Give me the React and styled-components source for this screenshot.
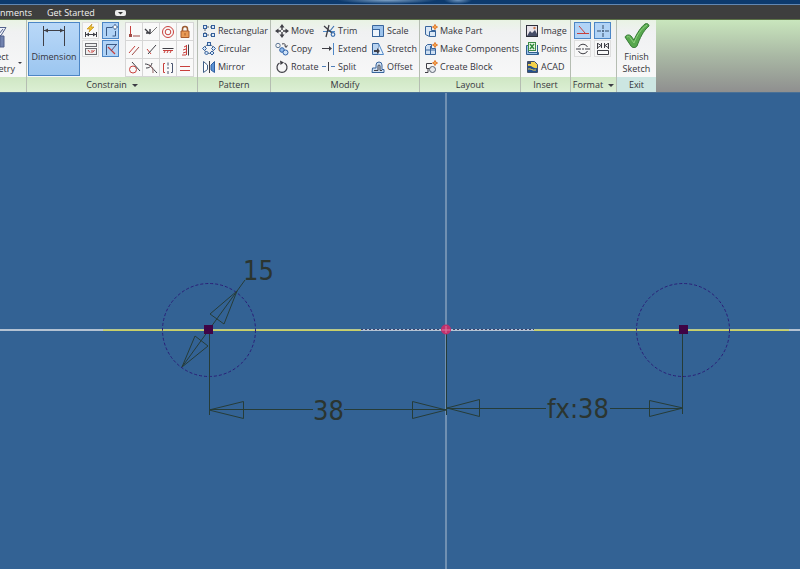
import React, { useState } from 'react';
import styled, { createGlobalStyle } from 'styled-components';

const RED = '#c8403c';
const DARK = '#3f3f46';
const BLUE = '#3a6fb0';
const INK = '#263c38';

const PATTERN = [
  {
    name: 'Rectangular',
    icon: (
      <g fill='#dcebfa' stroke='#345f9a'>
        <path d='M3 5v5M5 3h5M5 11h5' stroke='#5a6370' strokeDasharray='2 1' />
        <rect x='1.5' y='1.5' width='3' height='3' />
        <rect x='9.5' y='1.5' width='3' height='3' />
        <rect x='1.5' y='9.5' width='3' height='3' />
        <rect x='9.5' y='9.5' width='3' height='3' />
      </g>
    ),
  },
  {
    name: 'Circular',
    icon: (
      <g fill='#cfe2f7' stroke='#345f9a'>
        <circle cx='7' cy='7' r='4.5' fill='none' stroke='#6b7c90' />
        <rect x='5.5' y='.5' width='3' height='3' />
        <path d='M.5 6.500l2-2 2 2-2 2zM9.500 6.500l2-2 2 2-2 2zM2.500 11l2-2 2 2-2 2zM8 11l2-2 2 2-2 2z' />
      </g>
    ),
  },
  {
    name: 'Mirror',
    icon: (
      <g>
        <path d='M1.500 1.500L5.500 5v4.500L1.500 12.500z' fill='#fff' stroke='#3f5f88' />
        <path d='M12.500 1.500L9 5v5l3.500 2.500z' fill='#5b93d6' stroke='#2f5f9f' />
        <path d='M7.500 1v12' stroke={DARK} />
      </g>
    ),
  },
];

const MODIFY = [
  {
    name: 'Move',
    icon: (
      <g stroke={DARK} fill={DARK}>
        <path d='M7 3v3M7 8v3M3 7h3M8 7h3' strokeWidth='1.400' />
        <path d='M4.500 3.500L7 0l2.500 3.500zM4.500 10.500L7 14l2.500-3.500zM3.500 4.500L0 7l3.500 2.500zM10.500 4.500L14 7l-3.500 2.500z' stroke='none' />
      </g>
    ),
  },
  {
    name: 'Trim',
    icon: (
      <g fill='none'>
        <path d='M1 7.500h12' stroke='#4f88c8' />
        <path d='M2 2l8 7M4 13L7 1' stroke={DARK} strokeWidth='1.300' />
        <circle cx='11' cy='10.500' r='1.800' stroke={BLUE} strokeWidth='1.200' />
        <path d='M12 2L8 7' stroke={BLUE} strokeWidth='1.200' />
      </g>
    ),
  },
  {
    name: 'Scale',
    icon: (
      <g stroke='#38659c'>
        <path d='M1.500 1.500h11v11h-4v-7h-7z' fill='#9cc3ec' />
        <rect x='1.500' y='5.500' width='7' height='7' fill='#eef5fc' />
      </g>
    ),
  },
  {
    name: 'Copy',
    icon: (
      <g fill='none' stroke='#2f62a8'>
        <circle cx='3' cy='3.500' r='2.200' stroke='#5f7896' />
        <path d='M7 2c3-1 4 1 4 3M9.500 3.500L11 5.500l1.500-2' stroke={DARK} />
        <circle cx='7' cy='8' r='2.300' fill='#8db8ea' />
        <circle cx='10.500' cy='10.500' r='2.500' fill='#cfe2f7' />
      </g>
    ),
  },
  {
    name: 'Extend',
    icon: (
      <g>
        <path d='M0 6.500h8' stroke={DARK} />
        <path d='M7 4l3 2.500L7 9z' fill={DARK} />
        <path d='M11.500 1v12' stroke='#4f88c8' />
      </g>
    ),
  },
  {
    name: 'Stretch',
    icon: (
      <g>
        <path d='M1.500 1.500h6v11h-6z' fill='#b9d4f1' stroke='#38659c' />
        <path d='M7.500 1.500l5 11h-5' fill='#e9f2fb' stroke='#4f88c8' />
        <path d='M3 8h3V6l3 3-3 3v-2H3z' fill={DARK} />
      </g>
    ),
  },
  {
    name: 'Rotate',
    icon: (
      <g>
        <path d='M4.500 3a5 5 0 1 0 5 0' fill='none' stroke={DARK} strokeWidth='1.200' />
        <path d='M5 .5L9 2.500 5.500 5z' fill={DARK} />
      </g>
    ),
  },
  {
    name: 'Split',
    icon: (
      <g>
        <path d='M0 6.500h4M9 6.500h4' stroke='#4f7fb8' />
        <path d='M6.500 2v9' stroke={DARK} />
      </g>
    ),
  },
  {
    name: 'Offset',
    icon: (
      <g fill='none' stroke='#38659c'>
        <path d='M1 12.500h12v-3h-2V5a3 3 0 0 0-6 0v3H1.500z' fill='#cfe0f3' />
        <path d='M3 10.500h4V6a1 1 0 0 1 2 0v4.500h2' stroke={DARK} />
      </g>
    ),
  },
];

const spark = (
  <g stroke='#e2782c' fill='#f7b45a'>
    <path d='M11 0v6M8 3h6' />
    <circle cx='11' cy='3' r='1.500' />
  </g>
);

const LAYOUT = [
  {
    name: 'Make Part',
    icon: (
      <g>
        <path d='M1.500 2.500h6v4h4v6h-6l-4-2z' fill='#dbe8f6' stroke='#38659c' />
        <path d='M5.500 12.500v-5h6' fill='none' stroke='#38659c' />
        {spark}
      </g>
    ),
  },
  {
    name: 'Make Components',
    icon: (
      <g>
        <path d='M1.500 4.500l2-2h4v4h4v6h-10z' fill='#cfe0f3' stroke='#38659c' />
        <path d='M1.500 8h10M6.500 4v8.500' stroke='#38659c' />
        {spark}
      </g>
    ),
  },
  {
    name: 'Create Block',
    icon: (
      <g>
        <path d='M8 3.500H2.500v5h4M1 12.500h3v-4' fill='none' stroke={DARK} />
        <circle cx='8.500' cy='9.500' r='3' fill='#e6e9ee' stroke='#5a6370' />
        {spark}
      </g>
    ),
  },
];

const INSERT = [
  {
    name: 'Image',
    icon: (
      <g>
        <rect x='1.500' y='1.500' width='11' height='11' fill='#e9e4ea' stroke='#2d2f3a' />
        <path d='M2 12l3-5 2 2 3-3 2 4v2z' fill='#454c66' />
        <circle cx='9.500' cy='4' r='1.200' fill='#c9794c' />
      </g>
    ),
  },
  {
    name: 'Points',
    icon: (
      <g>
        <path d='M1.500 3.500h2v7h10v2h-12z' fill='#9fc3e8' stroke='#2f5f8f' />
        <rect x='3.500' y='.5' width='7' height='8' fill='#e8f5e5' stroke='#3d8d48' />
        <path d='M5 2l4 5M9 2L5 7' stroke='#2f8a3c' strokeWidth='1.400' />
        <path d='M12.500 3v9M4 10.500h9' stroke='#2f5f8f' />
      </g>
    ),
  },
  {
    name: 'ACAD',
    icon: (
      <g>
        <path d='M2.500 1.500h7l3 3v8h-10z' fill='#f3d14a' stroke='#41506a' />
        <path d='M3 6c4-1 5 3 9 2v4H3z' fill='#23518e' />
        <path d='M3 9c3-1 4 2 8 1' stroke='#efd050' />
        <path d='M3 2h3v2H3z' fill='#41506a' />
      </g>
    ),
  },
];

const CONSTRAINTS = [
  {
    name: 'Coincident',
    icon: <path d='M3.500 1v9' stroke={RED} />,
    extra: <path d='M2 9h3v3H2zM6 10.500h7v1H6z' fill='#a04a46' />,
  },
  {
    name: 'Collinear',
    icon: <path d='M6 9l7-7' stroke='#777' />,
    extra: <path d='M1 4l5 5M2 8h4V4' stroke={DARK} strokeWidth='1.400' />,
  },
  {
    name: 'Concentric',
    icon: <circle cx='7' cy='7' r='5.500' stroke={RED} />,
    extra: <circle cx='7' cy='7' r='2.800' stroke={RED} fill='none' />,
  },
  {
    name: 'Fix',
    icon: <path d='M4.500 6V4a2.500 2.500 0 0 1 5 0v2' stroke='#9b5b33' strokeWidth='1.500' />,
    extra: <path d='M3 6h8v6.500H3zM7 8v2.500' fill='#e99a55' stroke='#a85a2c' />,
  },
  { name: 'Parallel', icon: <path d='M2 10l6-7' stroke={RED} />, extra: <path d='M5 12l7-8' stroke='#a04a46' /> },
  { name: 'Perpendicular', icon: <path d='M3 6l4 5' stroke={RED} />, extra: <path d='M4 11l8-9' stroke={DARK} /> },
  {
    name: 'Horizontal',
    icon: <path d='M1.500 5.500h11' stroke={DARK} />,
    extra: <path d='M2 7.500h10M3 10l1-2M6 10l1-2M9 10l1-2' stroke={RED} />,
  },
  {
    name: 'Vertical',
    icon: <path d='M10.500 1.500v11' stroke={DARK} />,
    extra: <path d='M8.500 2v10M6 4l2-1M5 7l3-1M5 10l3-1M4 12h4' stroke={RED} />,
  },
  {
    name: 'Tangent',
    icon: <circle cx='6' cy='8.500' r='3.500' stroke={RED} />,
    extra: <path d='M5 1l8 9' stroke={DARK} />,
  },
  {
    name: 'Smooth',
    icon: <path d='M1 3c5 0 7 4 12 9M2 7c3 0 5-1 6-5' stroke={DARK} />,
    extra: <path d='M5 4c4 2 4 5 4 8' stroke='#8b5a5a' fill='none' />,
  },
  {
    name: 'Symmetric',
    icon: <path d='M4 2.500H2.500v9H4' stroke={RED} />,
    extra: <path d='M10 2.500h1.500v9H10M7 1.500v3M7 6v2M7 10v3' stroke='#4a5570' fill='none' />,
  },
  { name: 'Equal', icon: <path d='M2 5.500h10' stroke={RED} />, extra: <path d='M2 9.500h10' stroke={RED} /> },
];

const SHORTCUTS = [
  {
    name: 'Auto Dimension',
    icon: (
      <g>
        <path d='M1.500 8v5M12.500 8v5M2 10.500h10' stroke={DARK} />
        <path d='M8 0L3 5h3L5 8l5-5H7z' fill='#f0c02c' stroke='#b98512' strokeWidth='.6' />
        <path d='M5 8.500l-3 2 3 2zM9 8.500l3 2-3 2z' fill={DARK} />
      </g>
    ),
  },
  {
    name: 'Constraint Inference',
    on: true,
    icon: (
      <g fill='none'>
        <path d='M2.500 12V3.500h6M11.500 7v5h-3' stroke='#3a5a86' />
        <path d='M11 0l1 2 2 1-2 1-1 2-1-2-2-1 2-1z' fill='#fff' stroke='#3a5a86' strokeWidth='.7' />
      </g>
    ),
  },
  {
    name: 'Show Constraints',
    icon: (
      <g fill='#eee' stroke='#6b6b70'>
        <rect x='1.500' y='1.500' width='11' height='3' />
        <rect x='1.500' y='6.500' width='11' height='6' />
        <path d='M4 8l2 2.500M8 8v3M10.500 8L9 10' stroke={RED} />
      </g>
    ),
  },
  {
    name: 'Constraint Persistence',
    on: true,
    icon: (
      <g fill='none'>
        <path d='M2.500 13V2.500H13' stroke='#3a5a86' />
        <path d='M4 5l7 7' stroke={RED} strokeWidth='1.300' />
        <path d='M7 9l5-6' stroke='#5c4a70' />
      </g>
    ),
  },
];

const FORMATS = [
  { name: 'Construction', on: true, icon: <path d='M3 2l6 7M1 9.500h12' stroke={RED} /> },
  {
    name: 'Centerline',
    on: true,
    icon: <path d='M1 7h4M9 7h4M7 1v4M7 9v4M6 7h2M7 6v2' stroke='#344c68' />,
  },
  {
    name: 'Center Point',
    icon: (
      <g fill='none' stroke={DARK}>
        <path d='M2.500 5a5 5 0 0 1 9 0M2.500 9a5 5 0 0 0 9 0' />
        <path d='M0 7h5M6 7h2M9 7h5' />
      </g>
    ),
  },
  {
    name: 'Driven Dimension',
    icon: (
      <g fill='none' stroke={DARK}>
        <path d='M1.500 1v6M12.500 1v6M5.500 1v5M8.500 1v5M2 1.500l3 2-3 2M12 1.500l-3 2 3 2' />
        <path d='M1.500 12.500v-4h11v4z' />
      </g>
    ),
  },
];

const Icon = ({ children }) => (
  <Glyph viewBox='0 0 14 14' aria-hidden='true' fill='none'>
    {children}
  </Glyph>
);

const Tools = ({ items, columns }) => (
  <ToolGrid $columns={columns}>
    {items.map((item) => (
      <Tool key={item.name} type='button'>
        <Icon>{item.icon}</Icon>
        {item.name}
      </Tool>
    ))}
  </ToolGrid>
);

const Toggles = ({ items }) => {
  const [active, setActive] = useState(items.filter((i) => i.on).map((i) => i.name));

  const toggle = (name) => {
    setActive(active.includes(name) ? active.filter((n) => n !== name) : [...active, name]);
  };

  return (
    <ToggleGrid>
      {items.map(({ name, icon }) => (
        <Toggle
          key={name}
          type='button'
          aria-label={name}
          aria-pressed={active.includes(name)}
          $on={active.includes(name)}
          onClick={() => toggle(name)}
        >
          <Icon>{icon}</Icon>
        </Toggle>
      ))}
    </ToggleGrid>
  );
};

const Panel = ({ title, width, menu, exit, children }) => (
  <PanelBox $width={width}>
    <PanelBody>{children}</PanelBody>
    <PanelTitle $exit={exit}>
      {title}
      {menu && <Caret />}
    </PanelTitle>
  </PanelBox>
);

const Sketch = () => (
  <Drawing viewBox='0 93 800 476' role='img' aria-label='Sketch with two circles'>
    {/* axes */}
    <path d='M446 -2000V2600' stroke='#7090b2' strokeWidth='2' />
    <path d='M-2000 330H3000' stroke='#b4c2d3' strokeWidth='2' />
    <path d='M103 330H361M534 330H789' stroke='#b9c98c' strokeWidth='2' />
    <path d='M103 330.500H361M534 330.500H789' stroke='#c9cf66' />
    <path d='M361 329.500H534' stroke='#3d3e66' strokeDasharray='2 2' />

    {/* circles */}
    <g fill='none' stroke='#2a1f78' strokeDasharray='3 2'>
      <circle cx='209' cy='330' r='46.500' />
      <circle cx='683' cy='330' r='46.500' />
    </g>

    {/* dimensions */}
    <g fill='none' stroke={INK}>
      <path d='M209.500 334V415M446.500 334V415M682.500 334V414' />
      <path d='M209 409.500H313M344 409.500H446M447 408.500H546M610 408.500H683' />
      <path d='M209 410L243.500 401.500V418.500ZM446 410L412.500 401.500V418.500Z' />
      <path d='M447 408L479.500 399.500V416.500ZM683 408L649.500 400.500V416.500Z' />
      <path d='M245 280L182 367M237 291L210 314L224 324ZM182 367L195 336L208 346Z' />
    </g>
    <DimText x='243' y='280'>15</DimText>
    <DimText x='313' y='420'>38</DimText>
    <DimText x='547' y='418'>fx:38</DimText>

    {/* points */}
    <path d='M204 325h9v9h-9zM679 325h9v9h-9z' fill='#3f0445' />
    <circle cx='446' cy='329.500' r='5' fill='#c0306c' />
    <path d='M442 330H450M446 326V333' stroke='#dc7ba0' />
  </Drawing>
);

const App = () => (
  <>
    <GlobalStyle />
    <Window>
      <TitleBar />
      <TabBar>
        <CutTab>
          <Tab href='#environments'>Environments</Tab>
        </CutTab>
        <Tab href='#get-started'>Get Started</Tab>
        <Minimize type='button' aria-label='Minimize ribbon'>
          <svg width='11' height='6' viewBox='0 0 11 6' aria-hidden='true'>
            <rect width='11' height='6' rx='2' fill='#ececec' />
            <path d='M3 2h5L5.500 4.500z' fill='#333' />
          </svg>
        </Minimize>
      </TabBar>
      <Ribbon>
        <Panel width={27}>
          <CutButton type='button'>
            <CutIcon viewBox='0 0 16 22' aria-hidden='true'>
              <path d='M1 1.500h14l-5 8H6z' fill='#eef1f8' stroke='#52618c' />
              <path d='M8 8l4-5M9 10h4v11H9z' fill='#7182ae' stroke='#52618c' />
            </CutIcon>
            <CutLabel>
              <CutText>
                <span>Project</span>
                <span>Geometry</span>
              </CutText>
            </CutLabel>
            <Caret $small />
          </CutButton>
        </Panel>
        <Panel title='Constrain' width={171} menu>
          <BigButton type='button' $on>
            <svg width='26' height='23' viewBox='0 0 26 23' aria-hidden='true'>
              <path d='M2.500 2v20M23.500 2v20M3 6.500h20' stroke={DARK} fill='none' />
              <path d='M3 6.500l4-2v4zM23 6.500l-4-2v4z' fill={DARK} />
            </svg>
            <span>Dimension</span>
          </BigButton>
          <Toggles items={SHORTCUTS} />
          <ConstraintGrid>
            {CONSTRAINTS.map(({ name, icon, extra }) => (
              <Constraint key={name} type='button' aria-label={name}>
                <Icon>
                  {icon}
                  {extra}
                </Icon>
              </Constraint>
            ))}
          </ConstraintGrid>
        </Panel>
        <Panel title='Pattern' width={73}>
          <Tools items={PATTERN} />
        </Panel>
        <Panel title='Modify' width={149}>
          <Tools items={MODIFY} columns='47px 49px auto' />
        </Panel>
        <Panel title='Layout' width={101}>
          <Tools items={LAYOUT} />
        </Panel>
        <Panel title='Insert' width={50}>
          <Tools items={INSERT} />
        </Panel>
        <Panel title='Format' width={46} menu>
          <Toggles items={FORMATS} />
        </Panel>
        <Panel title='Exit' width={39} exit>
          <BigButton type='button'>
            <svg width='26' height='26' viewBox='0 0 26 26' aria-hidden='true'>
              <path
                d='M1 14c1-2 4-3 6-1l3 4C13 10 17 4 21 1c2-1 4 0 4 2-6 5-9 12-12 20-1 2-5 2-6 0z'
                fill='#58a84e'
                stroke='#357a35'
              />
              <path d='M3 14c2-1 3 0 4 2l3 4C13 12 17 6 23 2' fill='none' stroke='#8fd07f' />
            </svg>
            <span>Finish</span>
            <span>Sketch</span>
          </BigButton>
        </Panel>
      </Ribbon>
      <Canvas>
        <Sketch />
      </Canvas>
    </Window>
  </>
);

const GlobalStyle = createGlobalStyle`
  * {
    box-sizing: border-box;
  }

  body {
    margin: 0;
    font-family: 'Open Sans', 'Noto Sans', sans-serif;
    font-size: 9px;
    line-height: 12px;
    color: #35353c;
  }

  button {
    margin: 0;
    padding: 0;
    border: 0;
    background: none;
    color: inherit;
    font: inherit;
  }
`;

const Window = styled.div`
  display: flex;
  flex-direction: column;
  height: 100vh;
  overflow: hidden;
`;

const TitleBar = styled.header`
  flex: none;
  height: 5px;
  border-bottom: 1px solid #6287b2;
  background:
    radial-gradient(ellipse 50px 4px at 387px 0, #7fa3c8, transparent),
    radial-gradient(ellipse 14px 4px at 458px 0, #6f96c0, transparent),
    #0d3a6d;
`;

const TabBar = styled.nav`
  display: flex;
  flex: none;
  align-items: center;
  height: 15px;
  padding-top: 1px;
  border-bottom: 1px solid #5d7347;
  background: #3e3e3e;
`;

const Tab = styled.a`
  color: #f2f2f2;
  text-decoration: none;
  white-space: nowrap;
`;

const CutTab = styled.div`
  display: flex;
  justify-content: flex-end;
  width: 32px;
  margin-right: 15px;
  overflow: hidden;
`;

const Minimize = styled.button`
  display: flex;
  margin-left: 20px;
`;

const Ribbon = styled.section`
  display: flex;
  flex: none;
  height: 73px;
  border-bottom: 1px solid #4a7096;
  background: linear-gradient(#c9e6bd, #a9b8a4 50%, #8f8f8f);
`;

const PanelBox = styled.div`
  display: flex;
  flex: none;
  flex-direction: column;
  width: ${(props) => props.$width}px;
  overflow: hidden;
  border-right: 1px solid #b5bdb2;
  background: linear-gradient(#e9f3e4, #f0f1f2 12px, #fafafa);

  &:last-child {
    border-right: 0;
  }
`;

const PanelBody = styled.div`
  display: flex;
  flex: 1;
  padding: 2px 1px 0;
`;

const PanelTitle = styled.div`
  display: flex;
  align-items: center;
  justify-content: center;
  gap: 5px;
  height: 15px;
  padding-top: 1px;
  background: ${(props) => (props.$exit ? '#cce6e2' : 'linear-gradient(#cfe7c4, #dcefd4)')};
  white-space: nowrap;
`;

const Caret = styled.span`
  flex: none;
  border: ${(props) => (props.$small ? 2 : 3)}px solid transparent;
  border-top-color: #3c3c44;
  border-bottom: 0;
`;

const ToolGrid = styled.div`
  display: grid;
  grid-template-columns: ${(props) => props.$columns || 'auto'};
  grid-auto-rows: 18px;
  padding-left: 3px;
`;

const Tool = styled.button`
  display: flex;
  align-items: center;
  gap: 2px;
  white-space: nowrap;
`;

const Glyph = styled.svg`
  flex: none;
  width: 14px;
  height: 14px;
`;

const ToggleGrid = styled.div`
  display: grid;
  grid-template-columns: 17px 17px;
  grid-auto-rows: 17px;
  gap: 1px 3px;
  padding-left: 2px;
`;

const Toggle = styled.button`
  display: flex;
  align-items: center;
  justify-content: center;
  border: 1px solid ${(props) => (props.$on ? '#4c86c6' : '#dedede')};
  background: ${(props) => (props.$on ? '#b1d3f6' : '#f8f8f8')};
`;

const ConstraintGrid = styled.div`
  display: grid;
  grid-template-columns: repeat(4, 17px);
  grid-auto-rows: 18px;
  align-self: flex-start;
  margin-left: 6px;
  border-top: 1px solid #d6d6d6;
  border-left: 1px solid #d6d6d6;
`;

const Constraint = styled.button`
  display: flex;
  align-items: center;
  justify-content: center;
  border-right: 1px solid #d6d6d6;
  border-bottom: 1px solid #d6d6d6;
  background: #f9f9f9;
`;

const BigButton = styled.button`
  display: flex;
  flex-direction: column;
  align-items: center;
  width: ${(props) => (props.$on ? '52px' : '100%')};
  height: 54px;
  padding-top: 1px;
  border: ${(props) => (props.$on ? '1px solid #4c86c6' : '0')};
  background: ${(props) => (props.$on ? 'linear-gradient(#b9d8f8, #9cc6f0)' : 'none')};

  svg {
    flex: none;
    margin-bottom: ${(props) => (props.$on ? '4px' : '2px')};
  }
`;

const CutButton = styled.button`
  display: grid;
  grid-template-columns: 14px auto;
  grid-template-rows: 29px 24px;
  column-gap: 3px;
  align-items: center;
  justify-content: start;
  width: 100%;
`;

const CutIcon = styled.svg`
  grid-column: 1 / -1;
  width: 16px;
  height: 22px;
  margin-left: -10px;
`;

const CutLabel = styled.span`
  display: flex;
  justify-content: flex-end;
`;

const CutText = styled.span`
  display: flex;
  flex: none;
  flex-direction: column;
  align-items: center;
`;

const Canvas = styled.main`
  display: flex;
  flex: 1;
  min-height: 0;
  overflow: hidden;
  background: #336294;
`;

const Drawing = styled.svg`
  width: 100%;
  height: 100%;
  overflow: visible;
`;

const DimText = styled.text`
  fill: #2b3530;
  font-family: 'DejaVu Sans Condensed', 'DejaVu Sans', sans-serif;
  font-size: 27px;
`;

export default App;
